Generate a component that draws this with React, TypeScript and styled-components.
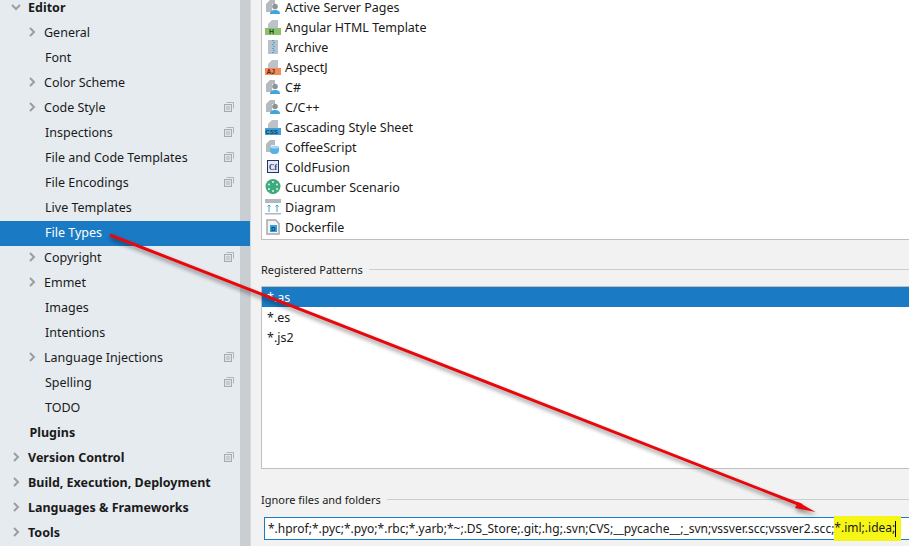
import styled, { createGlobalStyle } from 'styled-components';

type NavItem = {
  label: string;
  level: 0 | 1;
  arrow?: 'right' | 'down';
  copy?: boolean;
  selected?: boolean;
};

const NAV_ITEMS: NavItem[] = [
  { label: 'Editor', level: 0, arrow: 'down' },
  { label: 'General', level: 1, arrow: 'right' },
  { label: 'Font', level: 1 },
  { label: 'Color Scheme', level: 1, arrow: 'right' },
  { label: 'Code Style', level: 1, arrow: 'right', copy: true },
  { label: 'Inspections', level: 1, copy: true },
  { label: 'File and Code Templates', level: 1, copy: true },
  { label: 'File Encodings', level: 1, copy: true },
  { label: 'Live Templates', level: 1 },
  { label: 'File Types', level: 1, selected: true },
  { label: 'Copyright', level: 1, arrow: 'right', copy: true },
  { label: 'Emmet', level: 1, arrow: 'right' },
  { label: 'Images', level: 1 },
  { label: 'Intentions', level: 1 },
  { label: 'Language Injections', level: 1, arrow: 'right', copy: true },
  { label: 'Spelling', level: 1, copy: true },
  { label: 'TODO', level: 1 },
  { label: 'Plugins', level: 0 },
  { label: 'Version Control', level: 0, arrow: 'right', copy: true },
  { label: 'Build, Execution, Deployment', level: 0, arrow: 'right' },
  { label: 'Languages & Frameworks', level: 0, arrow: 'right' },
  { label: 'Tools', level: 0, arrow: 'right' },
];

type IconKind = 'person' | 'html' | 'zip' | 'aj' | 'css' | 'coffee' | 'cf' | 'cucumber' | 'diagram' | 'docker';

const FILE_TYPES: { label: string; icon: IconKind }[] = [
  { label: 'Active Server Pages', icon: 'person' },
  { label: 'Angular HTML Template', icon: 'html' },
  { label: 'Archive', icon: 'zip' },
  { label: 'AspectJ', icon: 'aj' },
  { label: 'C#', icon: 'person' },
  { label: 'C/C++', icon: 'person' },
  { label: 'Cascading Style Sheet', icon: 'css' },
  { label: 'CoffeeScript', icon: 'coffee' },
  { label: 'ColdFusion', icon: 'cf' },
  { label: 'Cucumber Scenario', icon: 'cucumber' },
  { label: 'Diagram', icon: 'diagram' },
  { label: 'Dockerfile', icon: 'docker' },
];

const PATTERNS = ['*.as', '*.es', '*.js2'];

// folded page shape shared by the icons that carry a coloured band
const Sheet = () => <path d="M7 1h6v8H3V5z" fill="#bcc2c8" />;

function FileIcon({ kind }: { kind: IconKind }) {
  switch (kind) {
    case 'person':
      return (
        <svg width="16" height="16" viewBox="0 0 16 16">
          <path d="M1 13V5l4-4h5v4H7v8z" fill="#b4bac0" />
          <circle cx="10" cy="7.500" r="2.800" fill="#8d9499" />
          <path d="M5 15c0-3 2-4 5-4s5 1 5 4z" fill="#3fa6d8" />
        </svg>
      );
    case 'html':
      return (
        <svg width="16" height="16" viewBox="0 0 16 16">
          <Sheet />
          <rect y="9" width="16" height="7" fill="#8cc16c" />
          <text x="4" y="15.200" fontSize="7" fontWeight="700" fontFamily="Liberation Sans" fill="#1d4d22">H</text>
        </svg>
      );
    case 'zip':
      return (
        <svg width="16" height="16" viewBox="0 0 16 16">
          <rect x="3" y="1" width="10" height="14" fill="#b7c2cc" />
          <path d="M7 1h2v1H7zM8 3h2v1H8zM7 5h2v1H7zM8 7h2v1H8zM7 9h2v1H7zM8 11h2v1H8zM7 13h2v1H7z" fill="#4f9fd3" />
        </svg>
      );
    case 'aj':
      return (
        <svg width="16" height="16" viewBox="0 0 16 16">
          <Sheet />
          <rect y="9" width="16" height="7" fill="#f08c5a" />
          <text x="1.500" y="15.200" fontSize="6.500" fontWeight="700" fontFamily="Liberation Sans" fill="#5a2412">AJ</text>
        </svg>
      );
    case 'css':
      return (
        <svg width="16" height="16" viewBox="0 0 16 16">
          <Sheet />
          <rect y="9" width="16" height="7" fill="#3f9fd6" />
          <text x="0.600" y="15" fontSize="6" fontWeight="700" fontFamily="Liberation Sans" fill="#12364f">CSS</text>
        </svg>
      );
    case 'coffee':
      return (
        <svg width="16" height="16" viewBox="0 0 16 16">
          <path d="M1 13V5l4-4h5v5H6v7z" fill="#b4bac0" />
          <path d="M5 8h9v3.500c0 2-1.500 3.500-3.200 3.500H8.200C6.500 15 5 13.500 5 11.500z" fill="#58b2e2" />
          <ellipse cx="9.500" cy="8" rx="4.500" ry="1.500" fill="#a8d8f0" />
        </svg>
      );
    case 'cf':
      return (
        <svg width="16" height="16" viewBox="0 0 16 16">
          <rect x="2.500" y="1.500" width="11" height="12" fill="#e4e8f4" stroke="#22356b" />
          <text x="4" y="10.500" fontSize="7.500" fontWeight="700" fontFamily="Liberation Serif" fill="#22356b">Cf</text>
        </svg>
      );
    case 'cucumber':
      return (
        <svg width="16" height="16" viewBox="0 0 16 16">
          <circle cx="8" cy="7.500" r="7.500" fill="#3dab7d" />
          <path d="M8 15l-3-1h6z" fill="#3dab7d" />
          <g fill="#dff3ea">
            <circle cx="8" cy="3" r="1" />
            <circle cx="4" cy="5.500" r="1" />
            <circle cx="12" cy="5.500" r="1" />
            <circle cx="4" cy="10" r="1" />
            <circle cx="12" cy="10" r="1" />
            <circle cx="8" cy="12" r="1" />
          </g>
        </svg>
      );
    case 'diagram':
      return (
        <svg width="16" height="16" viewBox="0 0 16 16">
          <rect y="0" width="16" height="4" fill="#b3b8bd" />
          <rect y="14" width="16" height="1.500" fill="#b3b8bd" />
          <path d="M4 13V6M2.500 7.500L4 6l1.500 1.500M12 13V6M10.500 7.500L12 6l1.500 1.500" stroke="#3fa0d8" fill="none" />
        </svg>
      );
    case 'docker':
      return (
        <svg width="16" height="16" viewBox="0 0 16 16">
          <path d="M2 1h8.500L14 4.500V15H2z" fill="#f4f4f4" stroke="#a2a7ac" strokeWidth="1.500" />
          <rect x="5" y="6" width="7" height="7" fill="#2fa3dc" />
          <text x="6.200" y="12" fontSize="6" fontWeight="700" fontFamily="Liberation Sans" fill="#10334d">D</text>
        </svg>
      );
  }
}

const Chevron = ({ dir }: { dir: 'right' | 'down' }) => (
  <svg width="10" height="10" viewBox="0 0 10 10">
    <path
      d={dir === 'right' ? 'M3 1l4 4-4 4' : 'M1 3l4 4 4-4'}
      fill="none"
      stroke="#9a9ea2"
      strokeWidth="2"
    />
  </svg>
);

const CopyIcon = () => (
  <svg width="10" height="10" viewBox="0 0 10 10">
    <path d="M2.500 .500h7v6" fill="none" stroke="#b0b5ba" />
    <rect x=".500" y="2.500" width="7" height="7" fill="#dfe3e7" stroke="#a6abb0" />
    <path d="M2 5h4M2 7h4" stroke="#b0b5ba" />
  </svg>
);

export default function App() {
  return (
    <>
      <GlobalStyle />
      <Page>
        <Sidebar>
          <ScrollTrack />
          <NavList>
            {NAV_ITEMS.map(item => (
              <NavRow key={item.label} $selected={item.selected}>
                {item.arrow && (
                  <ArrowSlot $level={item.level}>
                    <Chevron dir={item.arrow} />
                  </ArrowSlot>
                )}
                <NavLabel $level={item.level} $hasArrow={!!item.arrow} $selected={item.selected}>
                  {item.label}
                </NavLabel>
                {item.copy && (
                  <CopySlot>
                    <CopyIcon />
                  </CopySlot>
                )}
              </NavRow>
            ))}
          </NavList>
        </Sidebar>
        <Content>
          <TypeList>
            {FILE_TYPES.map(type => (
              <TypeRow key={type.label}>
                <FileIcon kind={type.icon} />
                <span>{type.label}</span>
              </TypeRow>
            ))}
          </TypeList>
          <SectionTitle $gap={19}>
            <span>Registered Patterns</span>
          </SectionTitle>
          <PatternList>
            {PATTERNS.map((pattern, i) => (
              <PatternRow key={pattern} $selected={i === 0}>
                {pattern}
              </PatternRow>
            ))}
          </PatternList>
          <SectionTitle $gap={20}>
            <span>Ignore files and folders</span>
          </SectionTitle>
          <IgnoreInput>
            *.hprof;*.pyc;*.pyo;*.rbc;*.yarb;*~;.DS_Store;.git;.hg;.svn;CVS;__pycache__;_svn;vssver.scc;vssver2.scc;
            <Marked>*.iml;.idea;</Marked>
            <Caret />
          </IgnoreInput>
        </Content>
        <ArrowOverlay width="909" height="546" viewBox="0 0 909 546">
          <path d="M110 235L802 505.500" stroke="#e8080c" strokeWidth="3" fill="none" />
          <path d="M798 502L815.500 512L795 508z" fill="#e8080c" />
        </ArrowOverlay>
      </Page>
    </>
  );
}

const GlobalStyle = createGlobalStyle`
  html, body {
    margin: 0;
    padding: 0;
    background: #f2f2f2;
  }
  body {
    font-family: "Noto Sans", "Open Sans", sans-serif;
    font-size: 12.5px;
    color: #1a1a1a;
  }
`;

const Page = styled.div`
  position: relative;
  display: flex;
  width: 909px;
  height: 546px;
  overflow: hidden;
  background: #f2f2f2;
`;

const Sidebar = styled.div`
  position: relative;
  display: flex;
  flex: 0 0 251px;
  box-sizing: border-box;
  background: #e6ebf0;
  border-right: 1px solid #d8d8d8;
`;

const NavList = styled.div`
  position: relative;
  flex: 1;
  margin-top: -4px;
`;

const NavRow = styled.div<{ $selected?: boolean }>`
  position: relative;
  display: flex;
  align-items: center;
  width: 250px;
  height: 25px;
  padding-bottom: 3px;
  box-sizing: border-box;
  background: ${props => (props.$selected ? '#1a7ac4' : 'transparent')};
`;

const ArrowSlot = styled.span<{ $level: number }>`
  position: absolute;
  left: ${props => (props.$level === 0 ? 11 : 27)}px;
  top: 6px;
  display: flex;
`;

const NavLabel = styled.span<{ $level: number; $hasArrow: boolean; $selected?: boolean }>`
  padding-left: ${props => (props.$level === 0 ? (props.$hasArrow ? 28 : 29.5) : props.$hasArrow ? 44 : 45)}px;
  font-weight: ${props => (props.$level === 0 ? 700 : 400)};
  color: ${props => (props.$selected ? '#fff' : '#1a1a1a')};
`;

const CopySlot = styled.span`
  position: absolute;
  left: 224px;
  top: 6px;
  display: flex;
`;

const ScrollTrack = styled.div`
  position: absolute;
  top: 0;
  bottom: 0;
  left: 240px;
  width: 10px;
  background: #c9ced3;
`;

const Content = styled.div`
  display: flex;
  flex: 1;
  flex-direction: column;
  min-width: 0;
  padding-left: 10px;
`;

const TypeList = styled.div`
  flex: none;
  box-sizing: border-box;
  height: 243px;
  margin-top: -3px;
  background: #fff;
  border: 1px solid #bfbfbf;
  border-top: none;
  border-right: none;
`;

const TypeRow = styled.div`
  display: flex;
  align-items: center;
  gap: 4px;
  height: 20px;
  padding-left: 3px;
  color: #1a1a1a;
`;

const SectionTitle = styled.div<{ $gap: number }>`
  display: flex;
  align-items: center;
  gap: 6px;
  height: 20px;
  margin-top: ${props => props.$gap}px;
  font-size: 11px;
  &::after {
    content: '';
    flex: 1;
    height: 1px;
    background: #cdcdcd;
  }
`;

const PatternList = styled.div`
  flex: none;
  box-sizing: border-box;
  height: 183px;
  margin-top: 7px;
  background: #fff;
  border: 1px solid #bfbfbf;
  border-right: none;
`;

const PatternRow = styled.div<{ $selected?: boolean }>`
  display: flex;
  align-items: center;
  height: 20px;
  padding-left: 5px;
  background: ${props => (props.$selected ? '#1a7ac4' : 'transparent')};
  color: ${props => (props.$selected ? '#fff' : '#1a1a1a')};
`;

const IgnoreInput = styled.div`
  display: flex;
  align-items: center;
  box-sizing: border-box;
  height: 23px;
  margin: 8px -10px 0 3px;
  padding-left: 3px;
  background: #fff;
  border: 1px solid #1a7ac4;
  border-right: none;
  font-size: 12px;
  white-space: nowrap;
`;

const Marked = styled.span`
  padding: 4px 6px 5px 0;
  line-height: 16px;
  background: #f6f616;
`;

const Caret = styled.span`
  width: 1px;
  height: 16px;
  margin-left: -6px;
  background: #000;
`;

const ArrowOverlay = styled.svg`
  position: absolute;
  left: 0;
  top: 0;
  filter: drop-shadow(1px 3px 2px rgba(0, 0, 0, 0.45));
  pointer-events: none;
`;
